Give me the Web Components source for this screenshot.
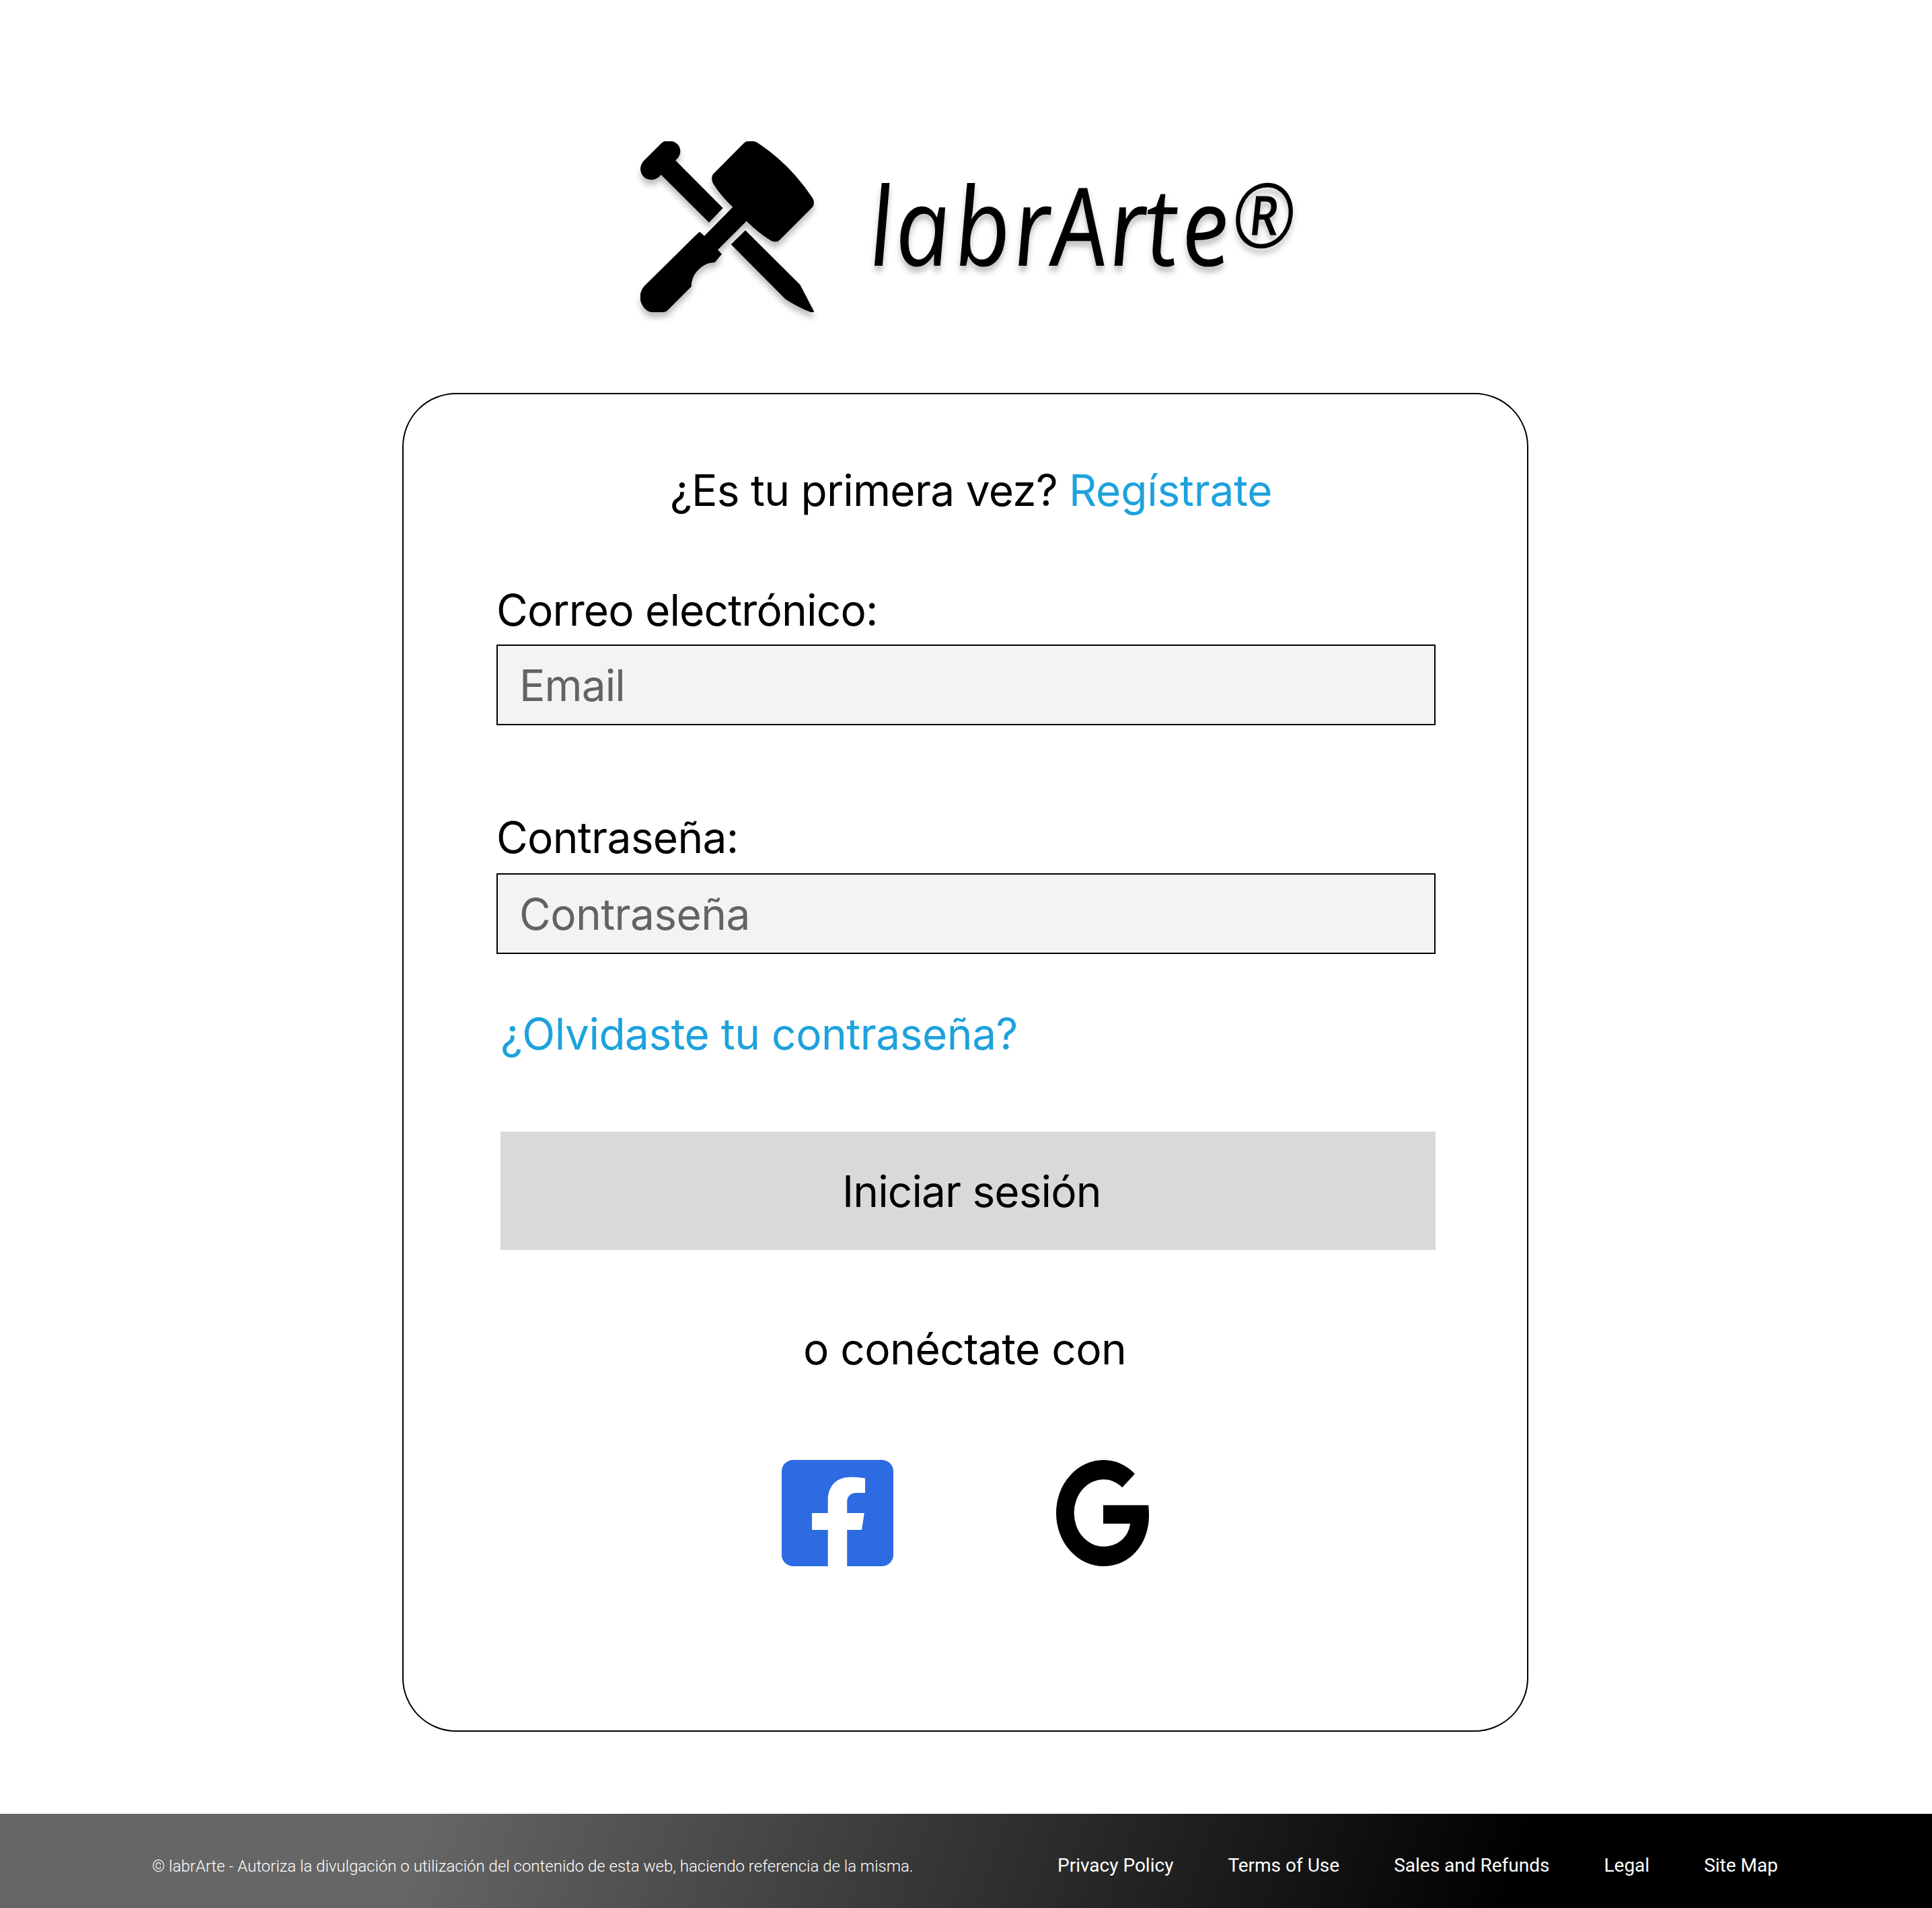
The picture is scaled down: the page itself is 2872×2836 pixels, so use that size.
<!DOCTYPE html>
<html lang="es">
<head>
<meta charset="utf-8">
<title>labrArte</title>
<style>
  html, body { margin: 0; padding: 0; background: #fff; }
  body { width: 2872px; font-family: Inter, "Noto Sans", sans-serif; color: #000; }
</style>
</head>
<body>
<login-page></login-page>
<script>
function component(name, html) {
  const t = document.createElement('template');
  t.innerHTML = html;
  customElements.define(name, class extends HTMLElement {
    constructor() {
      super();
      this.attachShadow({ mode: 'open' }).appendChild(t.content.cloneNode(true));
    }
  });
}

component('brand-logo', `
<style>
  :host { display: flex; align-items: flex-start; height: 404px; padding: 180px 0 0 920px; box-sizing: content-box; }
  svg { display: block; overflow: visible; flex: none; filter: drop-shadow(0 8px 4px rgba(0,0,0,.25)); }
  .word { margin: 50px 0 0 20px; }
  text { font-family: "Open Sans", "Noto Sans", sans-serif; font-style: italic; font-weight: 500; }
</style>
<svg width="320" height="320" viewBox="0 0 960 960">
  <path d="M204 90H238Q274 101 274 137Q272 160 252 175L464 388L402 452L188 239Q170 261 146 262Q99 258 96 212Q97 192 111 177L190 98Q197 92 204 90Z"/>
  <path d="M573 90H602Q613 92 622 99Q765 194 863 342Q870 352 870 367Q870 377 863 384L717 530Q708 539 697 538Q688 538 680 534Q622 498 569 446L441 574L459 593L427 631Q385 629 349 668Q323 697 323 738L218 843Q211 850 200 852H143Q108 843 96 800V772Q99 753 113 736L355 497Q360 492 366 498L381 512L508 383Q456 335 420 278Q412 263 416 245Q417 240 422 235L559 97Q565 91 573 90Z"/>
  <path d="M564 487L808 730L870 848V852H855Q795 828 743 794L500 550Z"/>
</svg>
<svg class="word" width="700" height="200" viewBox="0 0 700 200">
  <g transform="translate(0 165) skewX(6) scale(.9 1)">
    <text font-size="162" x="40 83 181 278 341 436 497 556">labrArte</text>
  </g>
  <g transform="translate(567 138) skewX(-6) scale(.86 1)">
    <text font-size="133">®</text>
  </g>
</svg>
`);

component('text-field', `
<style>
  :host { display: flex; flex-direction: column; gap: var(--gap, 12px); }
  .label, .box { font-size: 64px; line-height: 78px; white-space: nowrap; }
  .label { letter-spacing: var(--label-spacing, -.8px); }
  .box { box-sizing: border-box; height: 120px; border: 2px solid #000; background: #f3f3f3; color: #636363; padding: 20px 32px; letter-spacing: var(--box-spacing, -.8px); }
</style>
<div class="label"><slot name="label"></slot></div>
<div class="box"><slot></slot></div>
`);

component('facebook-icon', `
<style>:host { display: block; } svg { display: block; }</style>
<svg width="166" height="158" viewBox="1162 2170 166 158">
  <path fill="#2d6be2" d="M1180 2170H1310.5A17.5 16.5 0 0 1 1328 2186.5V2311.5A17.5 16.5 0 0 1 1310.5 2328H1259.2V2274H1281L1284.8 2249H1259.2V2232C1259.2 2225 1264 2219 1272.5 2219H1286V2197.3C1280 2196.3 1273 2195.5 1265 2195.5C1244 2195.5 1230.7 2208 1230.7 2230V2249H1207V2274H1230.7V2328H1179.5A17.5 16.5 0 0 1 1162 2311.5V2186.5A17.5 16.5 0 0 1 1179.5 2170Z"/>
</svg>
`);

component('google-icon', `
<style>:host { display: block; } svg { display: block; }</style>
<svg width="138" height="158" viewBox="1570 2170 138 158">
  <path d="M1687 2190.7A70 79 0 0 0 1640.5 2170A70.5 79 0 0 0 1640.5 2328C1679 2328 1708 2296 1708 2252Q1708 2244.5 1707.2 2237.3H1640V2264.8H1680C1678 2284 1662 2298.7 1640.5 2298.7A43.9 49.85 0 0 1 1640.5 2199C1651 2199 1661 2203.5 1668.2 2211Z"/>
</svg>
`);

component('login-card', `
<style>
  :host { display: flex; flex-direction: column; box-sizing: border-box; width: 1674px; height: 1990px; margin-left: 598px;
    border: 2px solid #000; border-radius: 80px; padding: 104px 136px 0 138px; font-size: 64px; line-height: 78px; white-space: nowrap; }
  .signup { padding-left: 258px; letter-spacing: -.75px; }
  .signup .link { letter-spacing: -.25px; }
  .link { color: #1da2dd; }
  .email { margin-top: 100px; --label-spacing: -.85px; --box-spacing: -.9px; }
  .pass { margin-top: 128px; --gap: 14px; --label-spacing: -.7px; --box-spacing: -.6px; }
  .forgot { margin: 80px 0 0 6px; letter-spacing: -.51px; }
  .submit { box-sizing: border-box; margin: 106px 0 0 6px; height: 176px; background: #d9d9d9; padding: 50px 0 0 508px; letter-spacing: -.9px; }
  .or { margin-top: 108px; padding-left: 456px; letter-spacing: -.55px; }
  .social { display: flex; gap: 242px; margin-top: 126px; padding-left: 424px; }
</style>
<div class="signup">¿Es tu primera vez? <span class="link">Regístrate</span></div>
<text-field class="email"><span slot="label">Correo electrónico:</span>Email</text-field>
<text-field class="pass"><span slot="label">Contraseña:</span>Contraseña</text-field>
<div class="forgot link">¿Olvidaste tu contraseña?</div>
<div class="submit">Iniciar sesión</div>
<div class="or">o conéctate con</div>
<div class="social"><facebook-icon></facebook-icon><google-icon></google-icon></div>
`);

component('site-footer', `
<style>
  :host { display: flex; align-items: flex-start; box-sizing: border-box; height: 140px; margin-top: 122px; padding: 60px 0 0 226px;
    color: #fff; font-family: Roboto, sans-serif; white-space: nowrap;
    background: linear-gradient(108deg, #666 calc(50% - 790px), #000 calc(50% + 790px)); }
  .copy { width: 1346px; font-size: 24px; line-height: 32px; font-weight: 300; padding-top: 2px; }
  nav { display: flex; gap: 81px; font-size: 28px; line-height: 33px; }
</style>
<div class="copy">© labrArte - Autoriza la divulgación o utilización del contenido de esta web, haciendo referencia de la misma.</div>
<nav><span>Privacy Policy</span><span>Terms of Use</span><span>Sales and Refunds</span><span>Legal</span><span>Site Map</span></nav>
`);

component('login-page', `
<style>:host { display: flex; flex-direction: column; height: 2836px; overflow: hidden; } brand-logo { box-sizing: border-box; height: 584px; flex: none; } login-card, site-footer { flex: none; }</style>
<brand-logo></brand-logo>
<login-card></login-card>
<site-footer></site-footer>
`);
</script>
</body>
</html>
